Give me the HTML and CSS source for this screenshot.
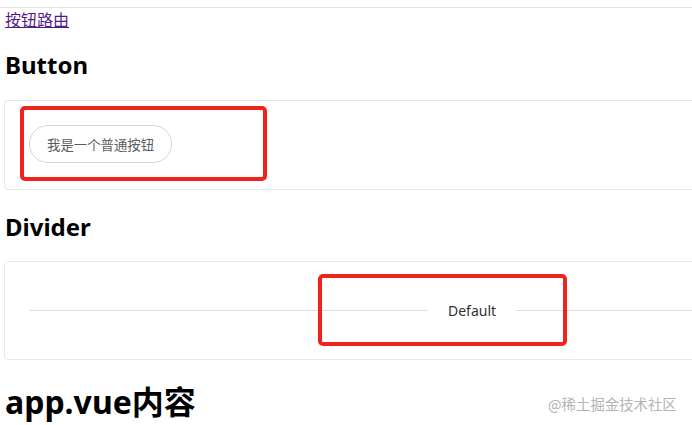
FILE: index.html
```html
<!DOCTYPE html>
<html lang="zh-CN">
<head>
<meta charset="utf-8">
<title>app.vue</title>
<link rel="stylesheet" href="styles.css">
</head>
<body>
<div class="topline"></div>
<div class="page">
  <a class="route-link" href="#button">按钮路由</a>
  <h2 class="section-title">Button</h2>
  <div class="demo-card card-button">
    <button class="pill-btn" type="button">我是一个普通按钮</button>
    <span class="mark mark-button"></span>
  </div>
  <h2 class="section-title title-divider">Divider</h2>
  <div class="demo-card card-divider">
    <div class="divider">
      <span class="divider-text">Default</span>
    </div>
    <span class="mark mark-divider"></span>
  </div>
  <h1 class="app-title">app.vue内容</h1>
</div>
<div class="watermark">@稀土掘金技术社区</div>
</body>
</html>
```
FILE: styles.css
```css
html, body {
  margin: 0;
  padding: 0;
  background: #ffffff;
  overflow: hidden;
  width: 692px;
  height: 425px;
}
body {
  position: relative;
  font-family: "Noto Sans", "Noto Sans CJK SC", sans-serif;
  color: #000;
}
.topline {
  margin-top: 7px;
  height: 0;
  border-top: 1px solid #e3e3e3;
}
.page {
  padding-left: 4px;
  width: 936px;
}
.route-link {
  display: block;
  width: max-content;
  margin: 2px 0 0 1px;
  font-size: 16px;
  line-height: 20px;
  color: #551a8b;
  text-decoration: underline;
}
.section-title {
  margin: 19px 0 19px 1px;
  font-size: 24px;
  line-height: 32px;
  font-weight: 700;
}
.title-divider {
  margin: 21px 0 18px 1px;
}
.demo-card {
  position: relative;
  border: 1px solid #e6e6e6;
  border-radius: 4px;
  padding: 24px;
}
.card-button {
  padding: 24px;
  height: 40px;
}
.pill-btn {
  display: block;
  box-sizing: border-box;
  height: 38px;
  padding: 0 17px;
  border: 1px solid #d4d6da;
  border-radius: 19px;
  background: #fff;
  color: #5a5c60;
  font-family: "Noto Sans CJK SC", sans-serif;
  font-size: 13.4px;
  line-height: 36px;
}
.divider {
  position: relative;
  margin: 24px 0;
  height: 0;
  border-top: 1px solid #dcdfe6;
}
.divider-text {
  position: absolute;
  left: 50%;
  top: 0;
  transform: translate(-50%, -50%);
  padding: 0 20px;
  background: #fff;
  color: #303133;
  font-size: 14px;
  line-height: 20px;
  font-family: "Noto Sans", "Noto Sans CJK SC", sans-serif;
}
.mark {
  position: absolute;
  box-sizing: border-box;
  border: 4px solid #f0231a;
  border-radius: 5px;
}
.mark-button {
  left: 15px;
  top: 5px;
  width: 247px;
  height: 75px;
}
.mark-divider {
  left: 313px;
  top: 12px;
  width: 249px;
  height: 72px;
}
.app-title {
  margin: 22px 0 0 1px;
  font-size: 32px;
  line-height: 40px;
  font-weight: 700;
}
.watermark {
  position: absolute;
  left: 548px;
  top: 394px;
  font-family: "Noto Sans CJK SC", sans-serif;
  font-size: 14.4px;
  line-height: 20px;
  color: #b4b4b4;
  white-space: nowrap;
}
```
